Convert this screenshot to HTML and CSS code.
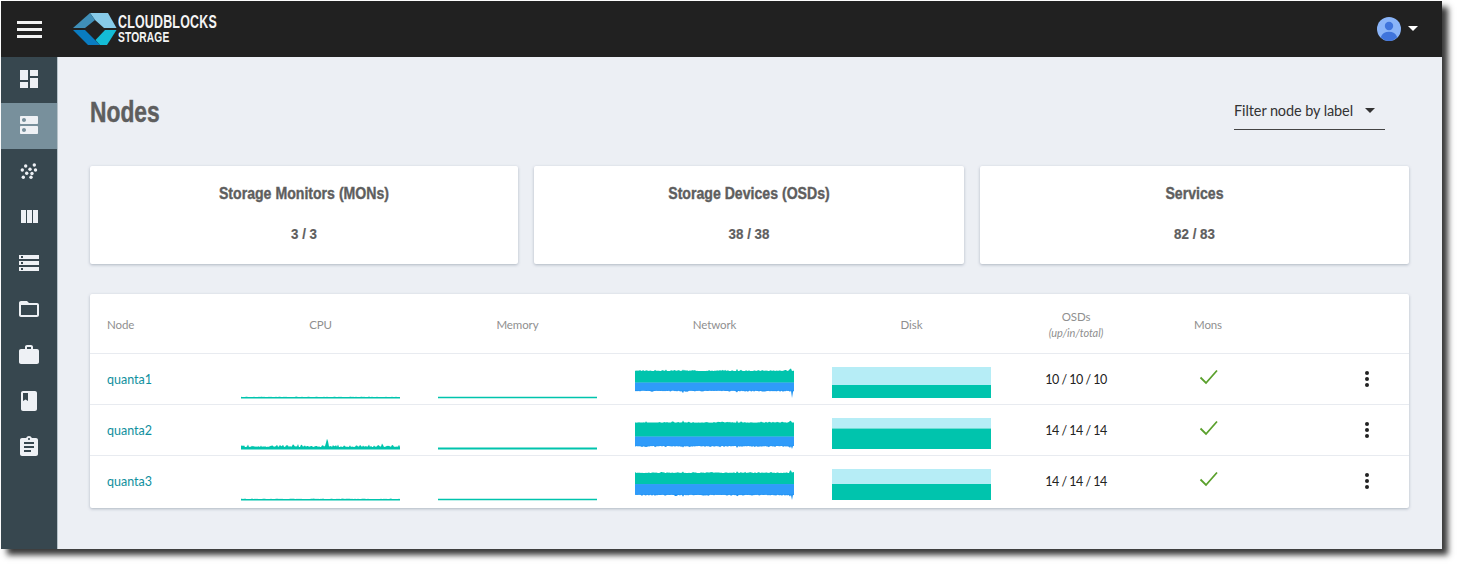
FILE: index.html
```html
<!DOCTYPE html>
<html lang="en">
<head>
<meta charset="utf-8">
<title>Nodes</title>
<link rel="stylesheet" href="styles.css">
</head>
<body>
<div class="window">
  <header class="topbar">
    <button class="menu" aria-label="Menu"><span></span><span></span><span></span></button>
    <div class="brand">
      <svg class="logo" viewBox="0 0 44 32" width="44" height="32">
        <polygon points="17,0 35,0 43.5,15 31,15 22,7" fill="#87cbe9"/>
        <polygon points="0,15 17,0 22,7 12,15" fill="#3f8fb8"/>
        <polygon points="0,17 12,17 23,28 27,32 15,32" fill="#0a7cc1"/>
        <polygon points="43.5,17 32,17 22.5,27 27,32 34,32" fill="#14bcd6"/>
      </svg>
      <div class="brand-text"><div class="brand-main">CLOUDBLOCKS</div><div class="brand-sub">STORAGE</div></div>
    </div>
    <div class="user">
      <svg viewBox="0 0 24 24" width="24" height="24">
        <circle cx="12" cy="12" r="12" fill="#8ab4f8"/>
        <circle cx="12" cy="9" r="4.2" fill="#3f74dc"/>
        <path d="M3.8 20.2C5 16.6 8.2 14.8 12 14.8s7 1.8 8.2 5.4A12 12 0 0 1 12 24a12 12 0 0 1-8.200-3.800z" fill="#3f74dc"/>
      </svg>
      <span class="caret caret-light"></span>
    </div>
  </header>
  <div class="body-row">
    <nav class="sidebar">
      <a class="nav-item"><svg viewBox="0 0 24 24"><path d="M3 13h8V3H3v10zm0 8h8v-6H3v6zm10 0h8V11h-8v10zm0-18v6h8V3h-8z"/></svg></a>
      <a class="nav-item active"><svg viewBox="0 0 24 24"><path d="M20 13H4c-.55 0-1 .45-1 1v6c0 .55.45 1 1 1h16c.55 0 1-.45 1-1v-6c0-.55-.45-1-1-1zM7 19c-1.100 0-2-.9-2-2s.9-2 2-2 2 .9 2 2-.9 2-2 2zM20 3H4c-.55 0-1 .45-1 1v6c0 .55.45 1 1 1h16c.55 0 1-.45 1-1V4c0-.55-.45-1-1-1zM7 9c-1.100 0-2-.9-2-2s.9-2 2-2 2 .9 2 2-.9 2-2 2z"/></svg></a>
      <a class="nav-item"><svg viewBox="0 0 24 24"><circle cx="8.700" cy="7" r="1.700"/><circle cx="17.300" cy="6" r="1.700"/><circle cx="13" cy="10.300" r="1.700"/><circle cx="5.300" cy="11" r="1.700"/><circle cx="18.500" cy="11" r="1.700"/><circle cx="9.700" cy="14.300" r="1.700"/><circle cx="15" cy="14.500" r="1.700"/><circle cx="6.300" cy="18.300" r="1.700"/><circle cx="14" cy="18.300" r="1.700"/></svg></a>
      <a class="nav-item"><svg viewBox="0 0 24 24"><path d="M10 18h5V5h-5v13zm-6 0h5V5H4v13zM16 5v13h5V5h-5z"/></svg></a>
      <a class="nav-item"><svg viewBox="0 0 24 24"><path d="M2 20h20v-4H2v4zm2-3h2v2H4v-2zM2 4v4h20V4H2zm4 3H4V5h2v2zm-4 7h20v-4H2v4zm2-3h2v2H4v-2z"/></svg></a>
      <a class="nav-item"><svg viewBox="0 0 24 24"><path d="M20 6h-8l-2-2H4c-1.100 0-1.990.9-1.990 2L2 18c0 1.100.9 2 2 2h16c1.100 0 2-.9 2-2V8c0-1.100-.9-2-2-2zm0 12H4V8h16v10z"/></svg></a>
      <a class="nav-item"><svg viewBox="0 0 24 24"><path d="M20 6h-4V4c0-1.110-.89-2-2-2h-4c-1.110 0-2 .89-2 2v2H4c-1.110 0-1.990.89-1.990 2L2 19c0 1.110.89 2 2 2h16c1.110 0 2-.89 2-2V8c0-1.110-.89-2-2-2zm-6 0h-4V4h4v2z"/></svg></a>
      <a class="nav-item"><svg viewBox="0 0 24 24"><path d="M18 2H6c-1.100 0-2 .9-2 2v16c0 1.100.9 2 2 2h12c1.100 0 2-.9 2-2V4c0-1.100-.9-2-2-2zM6 4h5v8l-2.500-1.500L6 12V4z"/></svg></a>
      <a class="nav-item"><svg viewBox="0 0 24 24"><path d="M19 3h-4.180C14.400 1.840 13.300 1 12 1c-1.300 0-2.400.84-2.820 2H5c-1.100 0-2 .9-2 2v14c0 1.100.9 2 2 2h14c1.100 0 2-.9 2-2V5c0-1.100-.9-2-2-2zm-7 0c.55 0 1 .45 1 1s-.45 1-1 1-1-.45-1-1 .45-1 1-1zm2 14H7v-2h7v2zm3-4H7v-2h10v2zm0-4H7V7h10v2z"/></svg></a>
    </nav>
    <main class="content">
      <div class="page-head">
        <h1 class="page-title">Nodes</h1>
        <div class="filter"><span>Filter node by label</span><span class="caret caret-dark"></span></div>
      </div>
      <section class="cards">
        <div class="card"><h2 class="card-title">Storage Monitors (MONs)</h2><div class="card-value">3 / 3</div></div>
        <div class="card"><h2 class="card-title">Storage Devices (OSDs)</h2><div class="card-value">38 / 38</div></div>
        <div class="card"><h2 class="card-title">Services</h2><div class="card-value">82 / 83</div></div>
      </section>
      <section class="table">
        <div class="row head">
          <div class="c-left">Node</div><div class="c-mid">CPU</div><div class="c-mid">Memory</div><div class="c-mid">Network</div><div class="c-mid">Disk</div>
          <div class="c-mid osd-head">OSDs<em>(up/in/total)</em></div><div class="c-mid">Mons</div><div></div>
        </div>
        <div class="row node">
          <a class="node-name">quanta1</a>
          <svg class="chart" data-kind="cpu" data-seed="11" data-base="1.500" data-amp="0.400" viewBox="0 0 159 32"></svg>
          <svg class="chart" data-kind="mem" data-base="1.500" viewBox="0 0 159 32"></svg>
          <svg class="chart" data-kind="net" data-seed="3" data-top="3" data-mid="15.700" data-bottom="24.600" data-tail="31" viewBox="0 0 159 32"></svg>
          <svg class="chart" data-kind="disk" data-top="0" data-mid="18" data-bottom="31" viewBox="0 0 159 32"></svg>
          <div class="osd">10 / 10 / 10</div>
          <svg class="check" viewBox="0 0 20 16"><path d="M1.500 8.500 7 14 18 1.500"/></svg>
          <button class="kebab" aria-label="More"><i></i><i></i><i></i></button>
        </div>
        <div class="row node">
          <a class="node-name">quanta2</a>
          <svg class="chart" data-kind="cpu" data-seed="29" data-base="2.500" data-amp="3" viewBox="0 0 159 32"></svg>
          <svg class="chart" data-kind="mem" data-base="2" viewBox="0 0 159 32"></svg>
          <svg class="chart" data-kind="net" data-seed="7" data-top="3.700" data-mid="18.700" data-bottom="29" data-tail="31" viewBox="0 0 159 32"></svg>
          <svg class="chart" data-kind="disk" data-top="0" data-mid="10.500" data-bottom="31" viewBox="0 0 159 32"></svg>
          <div class="osd">14 / 14 / 14</div>
          <svg class="check" viewBox="0 0 20 16"><path d="M1.500 8.500 7 14 18 1.500"/></svg>
          <button class="kebab" aria-label="More"><i></i><i></i><i></i></button>
        </div>
        <div class="row node last">
          <a class="node-name">quanta3</a>
          <svg class="chart" data-kind="cpu" data-seed="41" data-base="1.500" data-amp="0.500" viewBox="0 0 159 32"></svg>
          <svg class="chart" data-kind="mem" data-base="1.500" viewBox="0 0 159 32"></svg>
          <svg class="chart" data-kind="net" data-seed="17" data-top="3" data-mid="15.300" data-bottom="26.700" data-tail="31" viewBox="0 0 159 32"></svg>
          <svg class="chart" data-kind="disk" data-top="0" data-mid="15" data-bottom="31" viewBox="0 0 159 32"></svg>
          <div class="osd">14 / 14 / 14</div>
          <svg class="check" viewBox="0 0 20 16"><path d="M1.500 8.500 7 14 18 1.500"/></svg>
          <button class="kebab" aria-label="More"><i></i><i></i><i></i></button>
        </div>
      </section>
    </main>
  </div>
</div>
<script src="charts.js"></script>
</body>
</html>
```
FILE: styles.css
```css
* { box-sizing: border-box; }
html, body { margin: 0; height: 100%; background: #fff; overflow: hidden; }
body { padding: 1px; font-family: "Lato", "Liberation Sans", sans-serif; color: #222; }
.window { width: 1441px; height: 548px; display: flex; flex-direction: column; background: #eceff4; box-shadow: 6px 6px 6px rgba(0,0,0,.78); }
.topbar { height: 56px; flex: none; background: #212121; display: flex; align-items: center; padding-left: 16px; padding-right: 24px; }
.menu { width: 25px; height: 17px; margin: 0; padding: 0; border: 0; background: none; display: flex; flex-direction: column; justify-content: space-between; }
.menu span { display: block; height: 3px; background: #f2f2f2; }
.brand { display: flex; align-items: center; gap: 1px; margin-left: 31px; }
.brand-text { color: #f4f4f4; font-family: "Liberation Sans", sans-serif; font-weight: 700; margin-top: -1px; width: 100px; }
.brand-main { font-size: 18px; line-height: 16px; letter-spacing: .3px; transform: scaleX(.69); transform-origin: left; white-space: nowrap; }
.brand-sub { font-size: 14px; line-height: 14px; letter-spacing: .2px; transform: scaleX(.73); transform-origin: left; white-space: nowrap; }
.user { margin-left: auto; margin-top: -1px; display: flex; align-items: center; gap: 7px; }
.caret { display: block; width: 0; height: 0; border-left: 5px solid transparent; border-right: 5px solid transparent; border-top: 5px solid #fff; }
.caret-dark { border-top-color: #333; }
.body-row { flex: 1; display: flex; min-height: 0; }
.sidebar { width: 57px; flex: none; background: #37474f; border-right: 1px solid #b6c2c9; }
.nav-item { height: 46px; padding-bottom: 2px; display: flex; align-items: center; justify-content: center; }
.nav-item svg { width: 24px; height: 24px; fill: #eef1f5; }
.nav-item.active { background: #78909c; }
.content { flex: 1; min-width: 0; padding: 0 33px 0 32px; }
.page-head { height: 109px; display: flex; align-items: center; justify-content: space-between; padding-right: 24px; }
.page-title { margin: 0; font-family: "Liberation Sans", sans-serif; font-size: 30px; font-weight: 700; color: #5e5e5e; -webkit-text-stroke: .5px #5e5e5e; transform: scaleX(.76); transform-origin: left; }
.filter { width: 151px; height: 37px; padding-bottom: 2px; border-bottom: 1px solid #444; display: flex; align-items: center; justify-content: space-between; padding-right: 10px; font-size: 14.500px; letter-spacing: -.1px; color: #333; }
.cards { display: grid; grid-template-columns: 428px 430px 429px; column-gap: 16px; }
.card { height: 98px; background: #fff; border-radius: 2px; box-shadow: 0 1px 3px rgba(60,80,100,.35); text-align: center; padding-top: 17px; font-family: "Liberation Sans", sans-serif; color: #5e5e5e; }
.card-title { margin: 0; font-size: 17px; line-height: 22px; font-weight: 700; -webkit-text-stroke: .4px #5e5e5e; transform: scaleX(.83); }
.card-value { margin-top: 19px; font-size: 15px; line-height: 20px; font-weight: 700; -webkit-text-stroke: .2px #5e5e5e; transform: scaleX(.89); }
.table { margin-top: 30px; background: #fff; border-radius: 2px; box-shadow: 0 1px 3px rgba(60,80,100,.35); }
.row { display: grid; grid-template-columns: 96px 159px 159px 159px 159px 94px 94px 1fr; column-gap: 38px; padding: 0 30px 0 17px; align-items: center; }
.head { height: 60px; padding-top: 2px; font-size: 11.500px; letter-spacing: -.1px; color: #8f8f8f; border-bottom: 1px solid #e8ebf0; }
.c-mid { text-align: center; }
.osd-head { line-height: 16px; }
.osd-head em { display: block; font-size: 11px; font-style: italic; }
.node { height: 51px; border-bottom: 1px solid #e8ebf0; }
.node.last { height: 52px; padding-bottom: 2px; border-bottom: 0; }
.node-name { color: #0f8f9e; font-size: 12.500px; margin-top: 1px; }
.chart { display: block; width: 159px; height: 32px; margin-top: 8px; }
.osd { font-size: 12.500px; letter-spacing: -.5px; color: #222; text-align: center; }
.check { display: block; width: 20px; height: 16px; justify-self: center; margin: -5px 0 0 1px; fill: none; stroke: #5aa02c; stroke-width: 1.800; }
.kebab { justify-self: end; width: 24px; height: 24px; margin: 0; padding: 0; border: 0; background: none; display: flex; flex-direction: column; align-items: center; justify-content: center; gap: 2px; }
.kebab i { display: block; width: 4px; height: 4px; border-radius: 50%; background: #222; }
.fill-green { fill: #00c4ad; }
.fill-blue { fill: #2f9bfa; }
.fill-blue-edge { fill: #1a8ff0; }
.fill-pale { fill: #b6edf6; }
```
FILE: charts.js
```js
function rng(seed) {
  var s = seed;
  return function () {
    s = (s * 9301 + 49297) % 233280;
    return s / 233280;
  };
}

function area(svg, cls, d) {
  var p = document.createElementNS("http://www.w3.org/2000/svg", "path");
  p.setAttribute("class", cls);
  p.setAttribute("d", d);
  svg.appendChild(p);
}

function noisy(seed, amp, spikes) {
  var r = rng(seed), out = [];
  for (var x = 0; x <= 159; x += 1) {
    out.push([x, r() * r() * amp + (spikes[x] || 0)]);
  }
  return out;
}

document.querySelectorAll(".chart").forEach(function (svg) {
  var k = svg.dataset.kind, d = svg.dataset;
  if (k === "mem") {
    var t = 31 - parseFloat(d.base) / 2 - 0.5;
    area(svg, "fill-green", "M0 " + t + "H159V" + (t + parseFloat(d.base)) + "H0Z");
  } else if (k === "cpu") {
    var base = parseFloat(d.base), amp = parseFloat(d.amp);
    var sp = base > 2 ? { 57: 2.5, 85: 4, 86: 6.5, 87: 3, 119: 2, 141: 3.5 } : {};
    var pts = noisy(+d.seed, amp, sp).map(function (p) {
      return p[0] + " " + (31.5 - base - p[1]).toFixed(1);
    });
    area(svg, "fill-green", "M0 31.500L" + pts.join("L") + "L159 31.500Z");
  } else if (k === "disk") {
    area(svg, "fill-pale", "M0 " + d.top + "H159V" + d.mid + "H0Z");
    area(svg, "fill-green", "M0 " + d.mid + "H159V" + d.bottom + "H0Z");
  } else if (k === "net") {
    var top = +d.top, mid = +d.mid, bot = +d.bottom;
    var up = noisy(+d.seed, 1.5, { 48: 1.5, 102: 1.5, 106: 1, 155: 2, 156: 1.5 });
    var dn = noisy(+d.seed + 5, 1.5, { 48: 1.5, 102: 1.5, 155: 1.5 });
    var a = up.map(function (p) { return p[0] + " " + (top + 1 - p[1]).toFixed(1); });
    var b = dn.map(function (p) {
      var y = bot - 1 + p[1];
      if (p[0] === 157) y = +d.tail;
      return p[0] + " " + y.toFixed(1);
    });
    area(svg, "fill-green", "M0 " + mid + "L" + a.join("L") + "L159 " + mid + "Z");
    area(svg, "fill-blue-edge", "M0 " + mid + "L" + b.join("L") + "L159 " + mid + "Z");
    area(svg, "fill-blue", "M0 " + mid + "H159V" + (bot - 1.2) + "H0Z");
  }
});
```
